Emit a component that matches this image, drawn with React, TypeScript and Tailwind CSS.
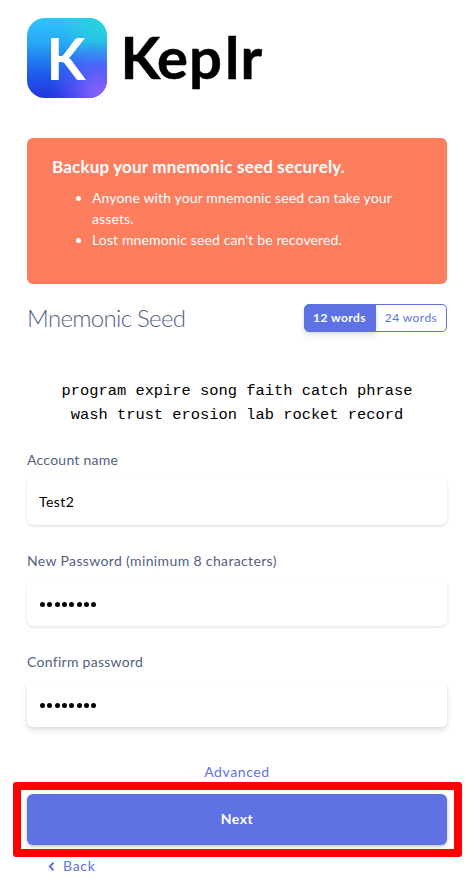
import type { ReactNode } from "react";

function Logo() {
  return (
    <svg className="block h-[90px] w-[250px]" viewBox="0 0 250 90" role="img" aria-label="Keplr">
      <defs>
        <linearGradient id="base" x1="0" y1="0" x2="0" y2="1">
          <stop offset="0" stopColor="#2fc4fb" />
          <stop offset="0.3" stopColor="#2aa9f6" />
          <stop offset="0.65" stopColor="#2063ee" />
          <stop offset="1" stopColor="#2233dc" />
        </linearGradient>
        <radialGradient id="teal" cx="0.98" cy="0.03" r="0.6">
          <stop offset="0" stopColor="#26d6d8" />
          <stop offset="1" stopColor="#26d6d8" stopOpacity="0" />
        </radialGradient>
        <radialGradient id="violet" cx="0.92" cy="0.93" r="0.65">
          <stop offset="0" stopColor="#8a62ff" />
          <stop offset="0.25" stopColor="#7c60ff" stopOpacity="0.85" />
          <stop offset="1" stopColor="#5a55ff" stopOpacity="0" />
        </radialGradient>
      </defs>
      <rect width="80" height="80" rx="18" fill="url(#base)" />
      <rect width="80" height="80" rx="18" fill="url(#teal)" />
      <rect width="80" height="80" rx="18" fill="url(#violet)" />
      <text x="19.5" y="62" className="fill-white font-['Lato',sans-serif] text-[58px] font-bold" textLength="39" lengthAdjust="spacingAndGlyphs">K</text>
      <text x="93.5 130 162 198 213.5" y="61" className="fill-black stroke-black stroke-[0.5px] font-['Lato',sans-serif] text-[58px] font-bold">Keplr</text>
    </svg>
  );
}

function Field({ label, tracking, focused, children }: { label: string; tracking: string; focused?: boolean; children: ReactNode }) {
  return (
    <div className="flex h-[101px] flex-col">
      <div className={`h-[29px] text-[14px] leading-[19px] text-[#525f7f] ${tracking}`}>{label}</div>
      <div
        className={`flex h-[46px] items-center rounded-[6px] bg-white px-3 text-[14px] text-black ${
          focused
            ? "shadow-[0_4px_6px_rgba(50,50,93,.11),0_1px_3px_rgba(0,0,0,.08)]"
            : "shadow-[0_1px_3px_rgba(50,50,93,.15),0_1px_0_rgba(0,0,0,.02)]"
        }`}
      >
        {children}
      </div>
    </div>
  );
}

function Dots() {
  return (
    <div className="flex gap-[2.35px] pl-[1px] pt-[3px]">
      {Array.from({ length: 8 }, (_, i) => (
        <span key={i} className="size-[5px] rounded-full bg-black" />
      ))}
    </div>
  );
}

export default function App() {
  return (
    <main className="h-[889px] w-[474px] overflow-hidden bg-white px-[27px] pt-[18px] font-['Lato','Noto_Sans',sans-serif]">
      <div className="h-[120px]">
        <Logo />
      </div>
      <section className="h-[146px] rounded-[6px] bg-[#fd7d5f] px-[25px] pt-[16px] text-white">
        <h2 className="text-[17px] font-bold leading-[26px] tracking-[0.18px]">Backup your mnemonic seed securely.</h2>
        <ul className="mt-[7px] list-disc pl-[40px] text-[14px] leading-[21px] tracking-[0.13px]">
          <li>
            Anyone with your mnemonic seed can take your
            <br />
            assets.
          </li>
          <li>Lost mnemonic seed can't be recovered.</li>
        </ul>
      </section>
      <div className="mt-[20px] flex h-[28px] items-center justify-between">
        <h1 className="h-[29px] whitespace-nowrap text-[24px] font-light leading-[27px] tracking-[-0.7px] text-[#525f7f]">Mnemonic Seed</h1>
        <div className="flex h-[28px] text-[12px] leading-[26px] tracking-[0.45px]">
          <button className="w-[72px] rounded-l-[5px] border border-[#5e72e4] bg-[#5e72e4] pr-[1px] font-bold text-white shadow-[0_4px_6px_rgba(50,50,93,.11),0_1px_3px_rgba(0,0,0,.08)]">12 words</button>
          <button className="w-[71px] rounded-r-[5px] border border-l-0 border-[#5e72e4] text-[#5e72e4]">24 words</button>
        </div>
      </div>
      <p className="mt-[47px] h-[71px] text-center font-['Liberation_Mono','Courier_New',monospace] text-[15.4px] leading-[24px] text-black">
        program expire song faith catch phrase
        <br />
        wash trust erosion lab rocket record
      </p>
      <Field label="Account name" tracking="tracking-[0.25px]">
        <span className="-mt-[2px] tracking-[0.4px]">Test2</span>
      </Field>
      <Field label="New Password (minimum 8 characters)" tracking="tracking-[0.36px]">
        <Dots />
      </Field>
      <Field label="Confirm password" tracking="tracking-[0.28px]" focused>
        <Dots />
      </Field>
      <button className="mt-[8px] block h-[21px] w-full text-center text-[14px] leading-[21px] tracking-[0.6px] text-[#5e72e4]">Advanced</button>
      <div className="-mx-[14px] h-[75px] w-[449px] rounded-[3px] border-8 border-[#ff0000] px-[6px] pt-[4px]">
        <button className="block h-[51px] w-[420px] rounded-[6px] bg-[#5e72e4] pb-[2px] text-[14px] font-bold tracking-[0.5px] text-white shadow-[0_4px_6px_rgba(50,50,93,.11),0_1px_3px_rgba(0,0,0,.18)]">Next</button>
      </div>
      <button className="flex h-[18px] items-center pl-[21px] text-[14px] leading-[18px] tracking-[0.7px] text-[#5e72e4]">
        <svg className="mr-[8px] h-[9px] w-[7px]" viewBox="0 0 7 9" fill="none" stroke="currentColor" strokeWidth="2">
          <path d="M5.5 0.8 1.8 4.5 5.5 8.2" />
        </svg>
        Back
      </button>
    </main>
  );
}
